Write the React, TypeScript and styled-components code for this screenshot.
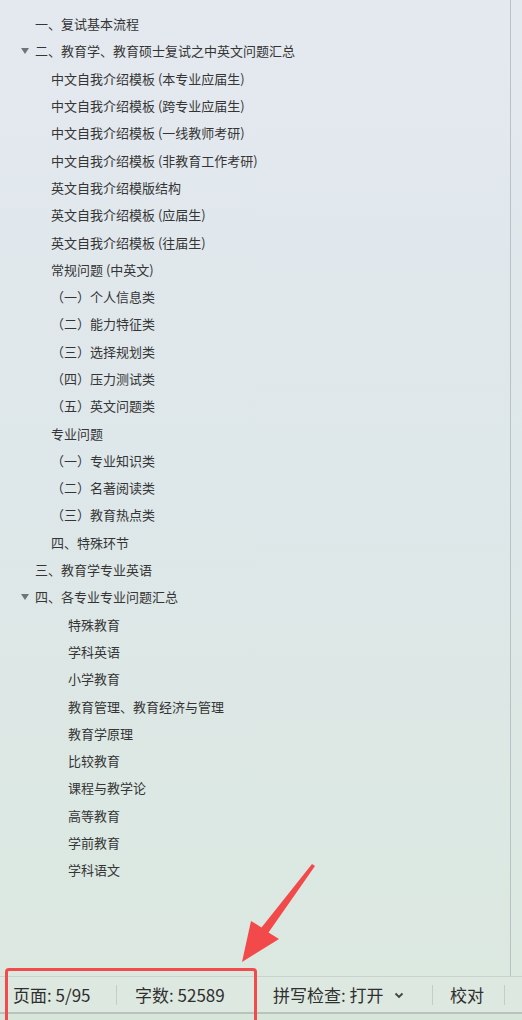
import React from "react";
import styled, { createGlobalStyle } from "styled-components";

const GlobalStyle = createGlobalStyle`
  html, body {
    margin: 0;
    padding: 0;
  }
  body {
    font-family: "Noto Sans CJK SC", "Noto Sans", sans-serif;
    color: #333;
  }
`;

interface ILevel {
  level: number;
}

const indents = [35, 51, 68];

const Page = styled("div")`
  position: relative;
  width: 522px;
  height: 1020px;
  overflow: hidden;
  display: flex;
  flex-direction: column;
  background: linear-gradient(180deg, #e4e9ef 0%, #dee7ea 45%, #dce8e3 80%, #dbe8df 100%);
`;

const Main = styled("div")`
  flex: 1;
  display: flex;
  min-height: 0;
`;

const TreePane = styled("div")`
  width: 511px;
  border-right: 1px solid #b9c3c6;
  padding-top: 10px;
  box-sizing: border-box;
`;

const SideStrip = styled("div")`
  flex: 1;
`;

const Row = styled("div")<ILevel>`
  display: flex;
  align-items: center;
  height: 27.3px;
  padding-left: ${(props) => indents[props.level] - 17}px;
  font-size: 13px;
  color: #353535;
  white-space: nowrap;
`;

const Toggle = styled("span")`
  width: 17px;
  height: 100%;
  display: flex;
  align-items: center;
  flex-shrink: 0;
`;

const Caret = styled("span")`
  margin-left: 3px;
  margin-top: 1px;
  width: 0;
  height: 0;
  border-left: 4px solid transparent;
  border-right: 4px solid transparent;
  border-top: 6px solid #6e7478;
`;

const StatusBar = styled("div")`
  height: 35px;
  display: flex;
  align-items: center;
  border-top: 1px solid #c9d3cd;
  border-bottom: 2px solid #b9c2bd;
  background: #dde8e0;
  font-size: 17px;
  color: #2f2f2f;
`;

const BottomStrip = styled("div")`
  height: 6px;
  background: #d6e6d9;
`;

interface IItem {
  w: number;
  pad: number;
}

const StatusItem = styled("div")<IItem>`
  width: ${(props) => props.w}px;
  padding-left: ${(props) => props.pad}px;
  box-sizing: border-box;
  display: flex;
  align-items: center;
  white-space: nowrap;
  flex-shrink: 0;
`;

const Divider = styled("div")`
  width: 1px;
  height: 20px;
  background: #c3cec7;
  flex-shrink: 0;
`;

const Chevron = styled("svg")`
  margin-left: 10px;
  margin-top: 2px;
`;

const Highlight = styled("div")`
  position: absolute;
  left: 5px;
  top: 968px;
  width: 252px;
  height: 60px;
  border: 3px solid #f24b4b;
  border-radius: 4px;
  box-sizing: border-box;
  pointer-events: none;
`;

const Arrow = styled("svg")`
  position: absolute;
  left: 0;
  top: 0;
  pointer-events: none;
`;

type Item = { text: string; level: number; open?: boolean };

const items: Item[] = [
  { text: "一、复试基本流程", level: 0 },
  { text: "二、教育学、教育硕士复试之中英文问题汇总", level: 0, open: true },
  { text: "中文自我介绍模板 (本专业应届生)", level: 1 },
  { text: "中文自我介绍模板 (跨专业应届生)", level: 1 },
  { text: "中文自我介绍模板 (一线教师考研)", level: 1 },
  { text: "中文自我介绍模板 (非教育工作考研)", level: 1 },
  { text: "英文自我介绍模版结构", level: 1 },
  { text: "英文自我介绍模板 (应届生)", level: 1 },
  { text: "英文自我介绍模板 (往届生)", level: 1 },
  { text: "常规问题 (中英文)", level: 1 },
  { text: "（一）个人信息类", level: 1 },
  { text: "（二）能力特征类", level: 1 },
  { text: "（三）选择规划类", level: 1 },
  { text: "（四）压力测试类", level: 1 },
  { text: "（五）英文问题类", level: 1 },
  { text: "专业问题", level: 1 },
  { text: "（一）专业知识类", level: 1 },
  { text: "（二）名著阅读类", level: 1 },
  { text: "（三）教育热点类", level: 1 },
  { text: "四、特殊环节", level: 1 },
  { text: "三、教育学专业英语", level: 0 },
  { text: "四、各专业专业问题汇总", level: 0, open: true },
  { text: "特殊教育", level: 2 },
  { text: "学科英语", level: 2 },
  { text: "小学教育", level: 2 },
  { text: "教育管理、教育经济与管理", level: 2 },
  { text: "教育学原理", level: 2 },
  { text: "比较教育", level: 2 },
  { text: "课程与教学论", level: 2 },
  { text: "高等教育", level: 2 },
  { text: "学前教育", level: 2 },
  { text: "学科语文", level: 2 },
];

export default function App() {
  return (
    <>
      <GlobalStyle />
      <Page>
        <Main>
          <TreePane>
            {items.map((item, i) => (
              <Row key={i} level={item.level}>
                <Toggle>{item.open && <Caret />}</Toggle>
                {item.text}
              </Row>
            ))}
          </TreePane>
          <SideStrip />
        </Main>
        <StatusBar>
          <StatusItem w={116} pad={13}>页面: 5/95</StatusItem>
          <Divider />
          <StatusItem w={138} pad={18}>字数: 52589</StatusItem>
          <StatusItem w={177} pad={18}>
            拼写检查: 打开
            <Chevron width="10" height="7" viewBox="0 0 10 7">
              <path d="M1.5 1.5 L5 5 L8.5 1.5" fill="none" stroke="#444" strokeWidth="1.8" />
            </Chevron>
          </StatusItem>
          <Divider />
          <StatusItem w={71} pad={17}>校对</StatusItem>
          <Divider />
        </StatusBar>
        <BottomStrip />
        <Highlight />
        <Arrow width="522" height="1020" viewBox="0 0 522 1020">
          <polygon
            points="242,962 251,921 261.5,927.5 312,864 315,866 268.5,932.5 279,939"
            fill="#f2494a"
          />
        </Arrow>
      </Page>
    </>
  );
}
